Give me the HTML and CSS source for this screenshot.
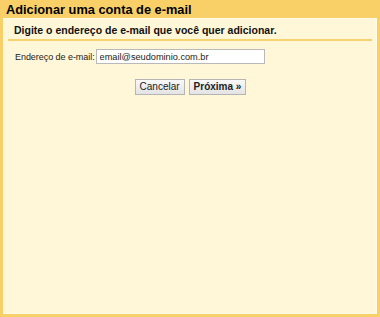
FILE: index.html
```html
<!DOCTYPE html>
<html lang="pt-BR">
<head>
<meta charset="utf-8">
<link rel="stylesheet" href="styles.css">
</head>
<body>
<div class="frame">
  <h1 class="title">Adicionar uma conta de e-mail</h1>
  <div class="panel">
    <p class="intro">Digite o endereço de e-mail que você quer adicionar.</p>
    <div class="field">
      <label class="label" for="email">Endereço de e-mail:</label>
      <input id="email" class="input" type="text" value="email@seudominio.com.br">
    </div>
    <div class="actions">
      <button class="btn">Cancelar</button>
      <button class="btn btn-primary">Próxima »</button>
    </div>
  </div>
</div>
</body>
</html>
```
FILE: styles.css
```css
* { box-sizing: border-box; }
html, body { margin: 0; padding: 0; }
body {
  width: 380px;
  height: 317px;
  font-family: "Liberation Sans", Arial, sans-serif;
  background: #f9d067;
}
.frame {
  height: 317px;
  display: flex;
  flex-direction: column;
  padding: 0 3px 3px 3px;
  background: #f9d067;
}
.title {
  margin: 0;
  padding: 3px 0 0 3px;
  height: 18px;
  font-size: 12.8px;
  font-weight: bold;
  line-height: 14px;
  color: #000;
}
.panel {
  flex: 1;
  background: #fff7d7;
  border: 1px solid #fffbea;
  padding: 0 4px;
}
.intro {
  margin: 0;
  padding: 5px 6px 0 6px;
  height: 22px;
  font-size: 10.5px;
  font-weight: bold;
  line-height: 13px;
  color: #111;
  border-bottom: 2px solid #f6d36f;
}
.field {
  display: flex;
  align-items: center;
  gap: 1px;
  padding: 8px 0 0 7px;
}
.label {
  font-size: 9px;
  color: #222;
  letter-spacing: -0.05px;
}
.input {
  width: 169px;
  height: 15px;
  padding: 0 3px;
  border: 1px solid #b9b9b9;
  background: #fff;
  font-family: "Liberation Sans", Arial, sans-serif;
  font-size: 9.2px;
  color: #222;
  outline: none;
}
.actions {
  display: flex;
  justify-content: center;
  gap: 4px;
  padding-top: 15px;
  padding-left: 1px;
}
.btn {
  height: 16px;
  padding: 0 4px;
  border: 1px solid #b5b5b5;
  background: linear-gradient(#f8f8f8, #e3e3e3);
  font-family: "Liberation Sans", Arial, sans-serif;
  font-size: 10px;
  color: #222;
  line-height: 14px;
}
.btn-primary { font-weight: bold; }
```
